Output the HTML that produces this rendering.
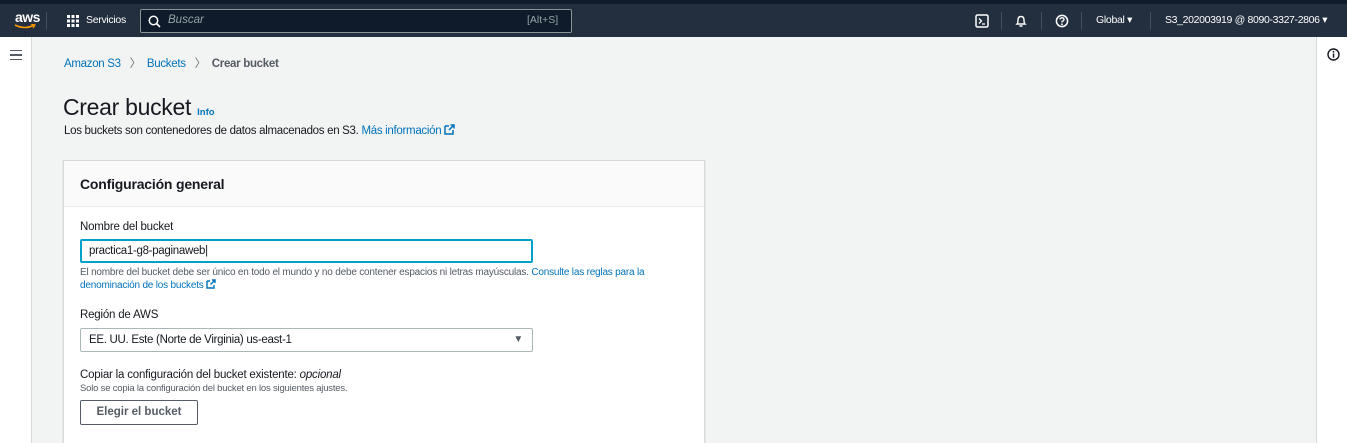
<!DOCTYPE html>
<html style="width:1347px;height:443px;overflow:hidden"><head><meta charset="utf-8"><style>
*{box-sizing:border-box;margin:0;padding:0}
body{width:1347px;height:443px;overflow:hidden;background:#f2f3f3;font-family:"Liberation Sans",sans-serif;color:#16191f;position:relative}
.top{position:absolute;left:0;top:0;width:1347px;height:4px;background:#0f1b2a}
.nav{position:absolute;left:0;top:4px;width:1347px;height:33px;background:#232f3e;color:#fff;font-size:11px}
.nav .abs{position:absolute}
.sep{position:absolute;top:8px;width:1px;height:18px;background:#414d5c}
.side{position:absolute;left:0;top:37px;width:32px;height:406px;background:#fff;border-right:1px solid #d5dbdb}
.rside{position:absolute;left:1316px;top:37px;width:31px;height:406px;background:#fff;border-left:1px solid #d5dbdb}
a{color:#0073bb;text-decoration:none}
.card{position:absolute;left:63px;top:160px;width:642px;height:290px;background:#fff;border:1px solid #d5dbdb;box-shadow:0 1px 1px rgba(0,28,36,.2)}
.ch{height:46px;background:#fafafa;border-bottom:1px solid #eaeded;padding:15px 16px;font-weight:bold;font-size:14px;letter-spacing:-0.2px}
.lab{position:absolute;left:16px;font-size:11.5px;letter-spacing:-0.2px}
.inp{position:absolute;left:16px;width:453px;height:24px;border:1px solid #aab7b8;border-radius:2px;font-size:11.5px;padding:5px 8px;letter-spacing:-0.3px}
.small{position:absolute;left:16px;font-size:10px;color:#545b64;letter-spacing:-0.2px;line-height:12px}
</style></head><body>
<div class="top"></div>
<div class="nav">
 <div class="abs" style="left:15px;top:5px;font-size:14px;font-weight:bold;letter-spacing:-0.5px">aws</div>
 <svg class="abs" style="left:14px;top:20px" width="22" height="6"><path d="M1 1 Q11 6 20 1" stroke="#ff9900" stroke-width="1.6" fill="none"/><path d="M17 0 L21 1 L19 4" stroke="#ff9900" stroke-width="1.2" fill="none"/></svg>
 <div class="sep" style="left:46px"></div>
 <svg class="abs" style="left:67px;top:11px" width="12" height="12" fill="#fff"><rect x="0" y="0" width="3" height="3"/><rect x="4.5" y="0" width="3" height="3"/><rect x="9" y="0" width="3" height="3"/><rect x="0" y="4.5" width="3" height="3"/><rect x="4.5" y="4.5" width="3" height="3"/><rect x="9" y="4.5" width="3" height="3"/><rect x="0" y="9" width="3" height="3"/><rect x="4.5" y="9" width="3" height="3"/><rect x="9" y="9" width="3" height="3"/></svg>
 <div class="abs" style="left:86px;top:10px;font-size:10.5px;letter-spacing:-0.3px">Servicios</div>
 <div class="abs" style="left:140px;top:5px;width:432px;height:24px;background:#0f1b2a;border:1px solid #879596;border-radius:2px"></div>
 <svg class="abs" style="left:148px;top:11px" width="13" height="13"><circle cx="5.5" cy="5.5" r="4.2" stroke="#fff" stroke-width="1.5" fill="none"/><path d="M8.5 8.5 L12 12" stroke="#fff" stroke-width="1.6"/></svg>
 <div class="abs" style="left:168px;top:10px;font-style:italic;color:#95a5a6;font-size:11.5px">Buscar</div>
 <div class="abs" style="left:527px;top:10px;color:#95a5a6;font-size:10.5px">[Alt+S]</div>
 <svg class="abs" style="left:975px;top:10px" width="14" height="14"><rect x="1" y="1" width="12" height="12" rx="1.5" stroke="#fff" stroke-width="1.5" fill="none"/><path d="M4 4.5 L6.5 7 L4 9.5 M7 10 H10" stroke="#fff" stroke-width="1.3" fill="none"/></svg>
 <div class="sep" style="left:1001px"></div>
 <svg class="abs" style="left:1014px;top:10px" width="14" height="14"><path d="M3 10 Q4 9 4 6 Q4 2.5 7 2.5 Q10 2.5 10 6 Q10 9 11 10 Z M5.5 12 H8.5" stroke="#fff" stroke-width="1.4" fill="none"/></svg>
 <div class="sep" style="left:1041px"></div>
 <svg class="abs" style="left:1055px;top:10px" width="14" height="14"><circle cx="7" cy="7" r="5.6" stroke="#fff" stroke-width="1.5" fill="none"/><path d="M5 5.5 Q5 3.8 7 3.8 Q9 3.8 9 5.5 Q9 6.8 7 7.4 V8.5" stroke="#fff" stroke-width="1.3" fill="none"/><circle cx="7" cy="10.3" r=".9" fill="#fff"/></svg>
 <div class="sep" style="left:1081px"></div>
 <div class="abs" style="left:1096px;top:10px;font-size:10.5px;letter-spacing:-0.3px">Global ▾</div>
 <div class="sep" style="left:1150px"></div>
 <div class="abs" style="left:1165px;top:10px;font-size:10.5px;letter-spacing:-0.35px">S3_202003919 @ 8090-3327-2806 ▾</div>
</div>
<div class="side"><div style="position:absolute;left:10px;top:13px;width:12px;height:10px;border-top:1.6px solid #545b64;border-bottom:1.6px solid #545b64"><div style="margin-top:3px;height:1.6px;background:#545b64"></div></div></div>
<div class="rside"><svg style="position:absolute;left:10px;top:11px" width="13" height="13"><circle cx="6.5" cy="6.5" r="5.5" stroke="#16191f" stroke-width="1.4" fill="none"/><rect x="5.8" y="5.5" width="1.5" height="4.2" fill="#16191f"/><circle cx="6.5" cy="3.8" r=".9" fill="#16191f"/></svg></div>

<div style="position:absolute;left:64px;top:55px;font-size:11.5px;letter-spacing:-0.3px"><a>Amazon S3</a> <span style="color:#687078;margin:0 6px">〉</span><a>Buckets</a> <span style="color:#687078;margin:0 6px">〉</span><span style="color:#545b64;font-weight:bold">Crear bucket</span></div>
<div style="position:absolute;left:63px;top:94px;font-size:23px;letter-spacing:-0.3px">Crear bucket <a style="font-size:9.5px;font-weight:bold;letter-spacing:0">Info</a></div>
<div style="position:absolute;left:64px;top:124px;font-size:11.5px;letter-spacing:-0.3px">Los buckets son contenedores de datos almacenados en S3. <a>Más información</a> <svg width="11" height="11" style="vertical-align:-1px"><path d="M1 2 H5 M1 2 V10 H9 V6" stroke="#0073bb" stroke-width="1.5" fill="none"/><path d="M5 6 L10 1 M6.5 1 H10 V4.5" stroke="#0073bb" stroke-width="1.5" fill="none"/></svg></div>

<div class="card">
 <div class="ch">Configuración general</div>
 <div class="lab" style="top:60px">Nombre del bucket</div>
 <div class="inp" style="top:78px;border:2px solid #00a1c9;padding:4px 7px">practica1-g8-paginaweb|</div>
 <div class="small" style="top:106px">El nombre del bucket debe ser único en todo el mundo y no debe contener espacios ni letras mayúsculas. <a>Consulte las reglas para la<br>denominación de los buckets</a> <svg width="10" height="10" style="vertical-align:-1px"><path d="M1 2 H4 M1 2 V9 H8 V6" stroke="#0073bb" stroke-width="1.4" fill="none"/><path d="M4.5 5.5 L9 1 M6 1 H9 V4" stroke="#0073bb" stroke-width="1.4" fill="none"/></svg></div>
 <div class="lab" style="top:148px">Región de AWS</div>
 <div class="inp" style="top:167px">EE. UU. Este (Norte de Virginia) us-east-1<span style="position:absolute;right:9px;top:5px;font-size:10px;color:#545b64">▼</span></div>
 <div class="lab" style="top:208px">Copiar la configuración del bucket existente: <i>opcional</i></div>
 <div class="small" style="top:222px;font-size:9.5px">Solo se copia la configuración del bucket en los siguientes ajustes.</div>
 <div style="position:absolute;left:16px;top:239px;width:118px;height:25px;border:1px solid #545b64;border-radius:2px;font-size:11.5px;font-weight:bold;color:#545b64;text-align:center;line-height:23px">Elegir el bucket</div>
</div>
</body></html>
